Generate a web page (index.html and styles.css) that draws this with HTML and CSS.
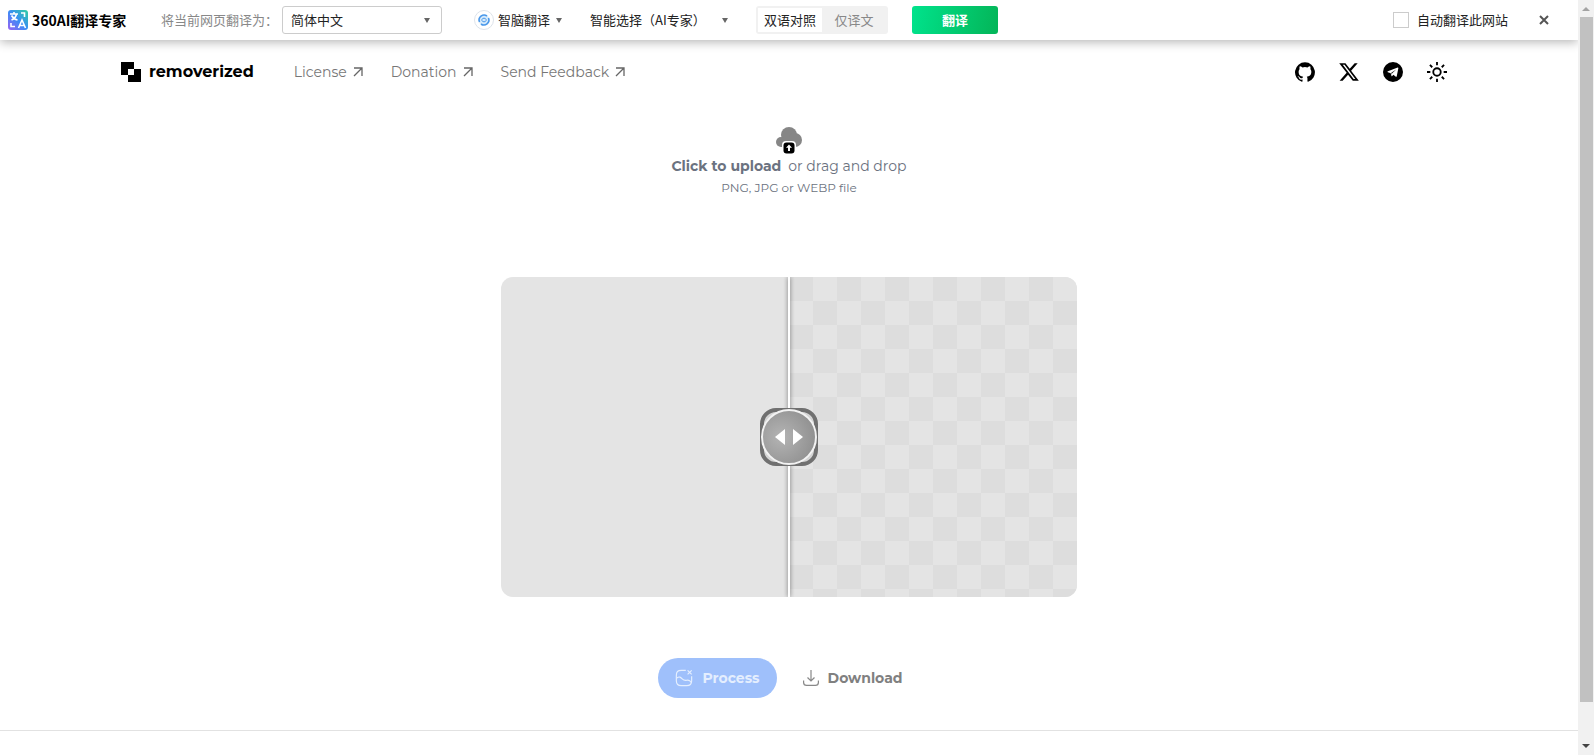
FILE: index.html
```html
<!doctype html>
<html lang="en">
<head>
<meta charset="UTF-8">
<title>removerized</title>
<link rel="stylesheet" href="styles.css">
</head>
<body>
<div class="page">
	<form class="translate-bar" lang="zh-CN">
		<div class="brand">
			<svg width="20" height="20" viewBox="0 0 20 20">
				<defs>
					<linearGradient id="brandFill" x1="1" y1="0" x2="0" y2="1">
						<stop offset="0" stop-color="#2fd0a0"/>
						<stop offset=".5" stop-color="#3a8df5"/>
						<stop offset="1" stop-color="#9a62f2"/>
					</linearGradient>
				</defs>
				<rect width="20" height="20" rx="3" fill="url(#brandFill)"/>
				<g fill="none" stroke="#fff" stroke-width="1.6">
					<path d="M2 4h8M6 2v2M3.500 10C6 9 8 7 8.500 4M3.500 5.500C5 8 7 9.500 9.500 10"/>
					<path d="M13 3h3.500v4M3 13v3.500h4"/>
					<path d="M10.500 18 14 10l3.500 8M12 15.500h4"/>
				</g>
			</svg>
			<strong>360AI翻译专家</strong>
		</div>
		<label class="target-label" for="target">将当前网页翻译为：</label>
		<div class="picker target">
			<select id="target"><option>简体中文</option></select>
		</div>
		<div class="picker engine">
			<svg width="20" height="20" viewBox="0 0 20 20" fill="none">
				<circle cx="10" cy="10" r="9.500" stroke="#dde3ea"/>
				<circle cx="10" cy="10" r="5.500" fill="#d5eafb"/>
				<path d="M5.500 12a5 5 0 0 1 7.500-6M14.500 8a5 5 0 0 1-7.500 6" stroke="#4a98ea" stroke-width="1.600"/>
				<path d="M7.500 9.500 10 8l2.500 1.500M7.500 10.500 10 12l2.500-1.500" stroke="#4a98ea"/>
			</svg>
			<select aria-label="engine"><option>智脑翻译</option></select>
		</div>
		<div class="picker expert">
			<select aria-label="expert"><option>智能选择（AI专家）</option></select>
		</div>
		<div class="mode">
			<input type="radio" name="mode" id="both" checked><label for="both">双语对照</label>
			<input type="radio" name="mode" id="single"><label for="single">仅译文</label>
		</div>
		<button type="button" class="translate">翻译</button>
		<label class="auto"><input type="checkbox">自动翻译此网站</label>
		<button type="button" class="close" aria-label="close">
			<svg width="10" height="10" viewBox="0 0 10 10"><path d="m1 1 8 8M9 1 1 9" stroke="#555" stroke-width="2"/></svg>
		</button>
	</form>

	<header class="header">
		<a class="logo" href="#">
			<svg width="20" height="20" viewBox="0 0 20 20"><path fill-rule="evenodd" d="M0 0h13v7h7v13H7v-7H0zM7 7v6h6V7z"/></svg>
			<span>removerized</span>
		</a>
		<nav class="nav">
			<a href="#">License <svg class="arrow" viewBox="0 0 10 10"><path d="M1 1h8v8M9 1 1 9"/></svg></a>
			<a href="#">Donation <svg class="arrow" viewBox="0 0 10 10"><path d="M1 1h8v8M9 1 1 9"/></svg></a>
			<a href="#">Send Feedback <svg class="arrow" viewBox="0 0 10 10"><path d="M1 1h8v8M9 1 1 9"/></svg></a>
		</nav>
		<div class="social">
			<a href="#" aria-label="GitHub"><svg viewBox="0 0 24 24"><path d="M12 .3a12 12 0 0 0-3.800 23.380c.6.12.83-.26.83-.57L9 21.070c-3.340.72-4.040-1.610-4.040-1.610-.55-1.390-1.340-1.760-1.340-1.760-1.080-.74.09-.73.09-.73 1.200.09 1.830 1.240 1.830 1.240 1.080 1.830 2.810 1.300 3.500 1 .1-.78.42-1.310.76-1.610-2.670-.3-5.470-1.330-5.470-5.930 0-1.310.47-2.380 1.240-3.220-.14-.3-.54-1.520.1-3.180 0 0 1-.32 3.300 1.230a11.500 11.500 0 0 1 6 0c2.280-1.550 3.290-1.230 3.290-1.230.64 1.660.24 2.880.12 3.180a4.650 4.650 0 0 1 1.230 3.220c0 4.610-2.800 5.630-5.480 5.920.42.36.81 1.100.81 2.220l-.01 3.290c0 .31.2.69.82.57A12 12 0 0 0 12 .3"/></svg></a>
			<a href="#" aria-label="X"><svg viewBox="1 1 22 22"><path fill-rule="evenodd" d="M18.240 2.250h3.310l-7.230 8.260 8.500 11.240h-6.660l-5.210-6.820-5.970 6.820H1.680l7.730-8.840L1.250 2.250h6.830l4.710 6.230zM17.080 19.770h1.840L7.080 4.130H5.120z"/></svg></a>
			<a href="#" aria-label="Telegram"><svg viewBox="0 0 24 24"><path fill-rule="evenodd" d="M12 0a12 12 0 1 0 0 24 12 12 0 0 0 0-24zM17.600 6.600c.6-.1.900.2.800.9l-1.900 9.600c-.1.700-.5.900-1.100.5l-2.900-2.200-1.500 1.500c-.3.300-.7.300-.8-.2l-.9-3.300-3.500-1.100c-.7-.2-.6-.8.1-1.100zM10 13l.5 2.400.5-2 4.900-4.500z"/></svg></a>
			<a href="#" aria-label="Theme"><svg viewBox="0 0 24 24" fill="none" stroke="#000" stroke-width="2.200"><circle cx="12" cy="12" r="4.500"/><path d="M12 0v4M12 20v4M0 12h4M20 12h4M3.500 3.500l2.800 2.800M17.700 17.700l2.800 2.800M20.500 3.500l-2.800 2.800M6.300 17.700l-2.800 2.800"/></svg></a>
		</div>
	</header>

	<main class="main">
		<button type="button" class="upload">
			<svg width="28" height="28" viewBox="0 0 28 28">
				<g fill="#868686"><circle cx="14" cy="9" r="8"/><circle cx="6" cy="16" r="5"/><circle cx="20" cy="14" r="7"/><path d="M6 12h15v9H6z"/></g>
				<rect x="7" y="15" width="14" height="14" rx="4" fill="#fff"/>
				<rect x="8.500" y="16.500" width="11" height="11" rx="3"/>
				<path d="M14 18.500l3 3.300h-2V25h-2v-3.200h-2z" fill="#fff"/>
			</svg>
			<span class="upload-title"><b>Click to upload</b> or drag and drop</span>
			<span class="upload-hint">PNG, JPG or WEBP file</span>
		</button>

		<div class="compare">
			<div class="before"></div>
			<div class="after"></div>
			<div class="divider">
				<div class="handle">
					<svg width="28" height="16" viewBox="0 0 28 16" fill="#fff"><path d="M10 0v16L0 8zM18 0v16l10-8z"/></svg>
				</div>
			</div>
			<input type="range" class="range" aria-label="Compare" min="0" max="100" value="50">
		</div>

		<div class="actions">
			<button type="button" class="process" disabled>
				<svg width="18" height="18" viewBox="0 0 20 20" fill="none" stroke="#e4eefe" stroke-width="1.300">
					<path d="M12 1.500H7C3 1.500 1.500 3 1.500 7v6c0 4 1.500 5.500 5.500 5.500h6c4 0 5.500-1.500 5.500-5.500V8"/>
					<path d="m14 1.500 4.500 4.500M18.500 1.500 14 6"/>
					<path d="M2 10c3-2 4-1 6 1s3 2 5 1.500 4 .5 5 2.500"/>
				</svg>
				Process
			</button>
			<button type="button" class="download" disabled>
				<svg width="16" height="16" viewBox="0 0 16 16" fill="none" stroke="#888" stroke-width="1.200">
					<path d="M8 0v11M4.500 7.500 8 11l3.500-3.500"/>
					<path d="M.6 10.500v2c0 2 1 2.900 3 2.900h8.800c2 0 3-.9 3-2.900v-2"/>
				</svg>
				Download
			</button>
		</div>
	</main>
	<footer class="footer"></footer>
</div>
<div class="scrollbar">
	<svg width="8" height="4" viewBox="0 0 8 4"><path d="M0 4 4 0l4 4z" fill="#a3a3a3"/></svg>
	<div class="track"><div class="thumb"></div></div>
	<svg width="8" height="4" viewBox="0 0 8 4"><path d="M0 0h8L4 4z" fill="#444"/></svg>
</div>
</body>
</html>
```
FILE: styles.css
```css
*{box-sizing:border-box;}
body{margin:0;display:flex;height:100vh;background:#fff;color:#000;font-family:Montserrat,Inter,sans-serif;font-size:14px;line-height:20px;}
a{color:inherit;text-decoration:none;}
svg{display:block;flex:none;}
button,select,input{font:inherit;color:inherit;margin:0;}
button{border:0;padding:0;background:none;}
.page{flex:1;min-width:0;display:flex;flex-direction:column;overflow:hidden;}

/* translate bar */
.translate-bar{display:flex;align-items:center;height:40px;padding:0 29px 0 8px;background:#fff;box-shadow:0 2px 10px rgba(0,0,0,.3);font-family:"Noto Sans CJK SC",sans-serif;font-size:13px;white-space:nowrap;color:#222;}
.brand{display:flex;align-items:center;gap:4px;width:153px;font-size:14px;color:#000;}
.target-label{width:121px;color:#888;}
.picker{position:relative;display:flex;align-items:center;}
.picker select{width:100%;height:28px;padding:0;border:0;background:none;appearance:none;outline:0;}
.picker:after{content:"";position:absolute;right:12px;border:3px solid transparent;border-top:5px solid #666;border-bottom:0;pointer-events:none;}
.target{width:160px;}
.target select{padding-left:8px;border:1px solid #ccc;border-radius:3px;}
.engine{width:100px;margin-left:32px;gap:4px;}
.expert{width:150px;margin-left:16px;}
.mode{display:flex;width:132px;height:28px;margin-left:16px;padding:2px;border-radius:3px;background:#f1f1f1;color:#888;}
.mode input{position:absolute;opacity:0;}
.mode label{flex:1;text-align:center;line-height:24px;}
.mode input:checked + label{background:#fff;color:#222;}
.translate{width:86px;height:28px;margin-left:24px;border-radius:3px;background:linear-gradient(100deg,#00e38c,#04b558);color:#fff;font-weight:bold;}
.auto{display:flex;align-items:center;gap:8px;margin-left:auto;}
.auto input{width:16px;height:16px;border:1px solid #ccc;background:#fff;appearance:none;}
.close{margin-left:31px;}

/* header */
.header{display:flex;align-items:center;width:100%;max-width:1336px;height:64px;margin:0 auto;padding-right:10px;}
.logo{display:flex;align-items:center;gap:8px;font-size:16px;font-weight:700;}
.nav{display:flex;gap:28px;margin-left:40px;color:#777;}
.nav a{display:flex;align-items:center;gap:6px;}
.arrow{width:10px;height:10px;fill:none;stroke:#666;stroke-width:1.3;}
.social{display:flex;gap:24px;margin-left:auto;}
.social svg{width:20px;height:20px;}

/* content */
.main{display:flex;flex-direction:column;align-items:center;padding:22px 16px 32px;}
.upload{display:flex;flex-direction:column;align-items:center;color:#6b7280;}
.upload-title{display:flex;gap:7px;margin-top:2px;}
.upload-hint{margin-top:2px;font-size:12px;}
.compare{position:relative;display:flex;width:100%;max-width:576px;height:320px;margin-top:79px;border-radius:12px;overflow:hidden;background:#e4e4e4;}
.before,.after{flex:1;}
.after{background:repeating-conic-gradient(#e4e4e4 0 25%,#ddd 0 50%) 0 0/48px 48px;}
.divider{position:absolute;top:0;bottom:0;left:50%;width:2px;margin-left:-1px;display:flex;align-items:center;justify-content:center;background:#fff;box-shadow:0 0 4px rgba(0,0,0,.6);}
.handle{position:relative;display:flex;flex:none;align-items:center;justify-content:center;width:58px;height:58px;border:4px solid #707070;border-radius:16px;background:#d4d4d4;}
.handle:before{content:"";position:absolute;box-sizing:border-box;width:56px;height:56px;border:2px solid #f2f2f2;border-radius:50%;background:radial-gradient(circle at 35% 50%,#b4b4b4,#888);}
.handle svg{position:relative;}
.range{position:absolute;top:0;left:0;width:100%;height:100%;opacity:0;}
.actions{display:flex;gap:9px;margin-top:61px;}
.actions button{display:flex;align-items:center;gap:9px;height:40px;padding:0 17px;border-radius:20px;font-weight:700;}
.process{background:#9fc0fb;color:#e4eefe;}
.download{color:#808080;}
.footer{flex:1;border-top:1px solid #e2e2e2;}

/* scrollbar */
.scrollbar{display:flex;flex-direction:column;align-items:center;width:16px;padding:7px 0;background:#f1f1f1;}
.track{flex:1;width:13px;margin:6px 0;}
.thumb{height:95%;background:#c1c1c1;}
```
